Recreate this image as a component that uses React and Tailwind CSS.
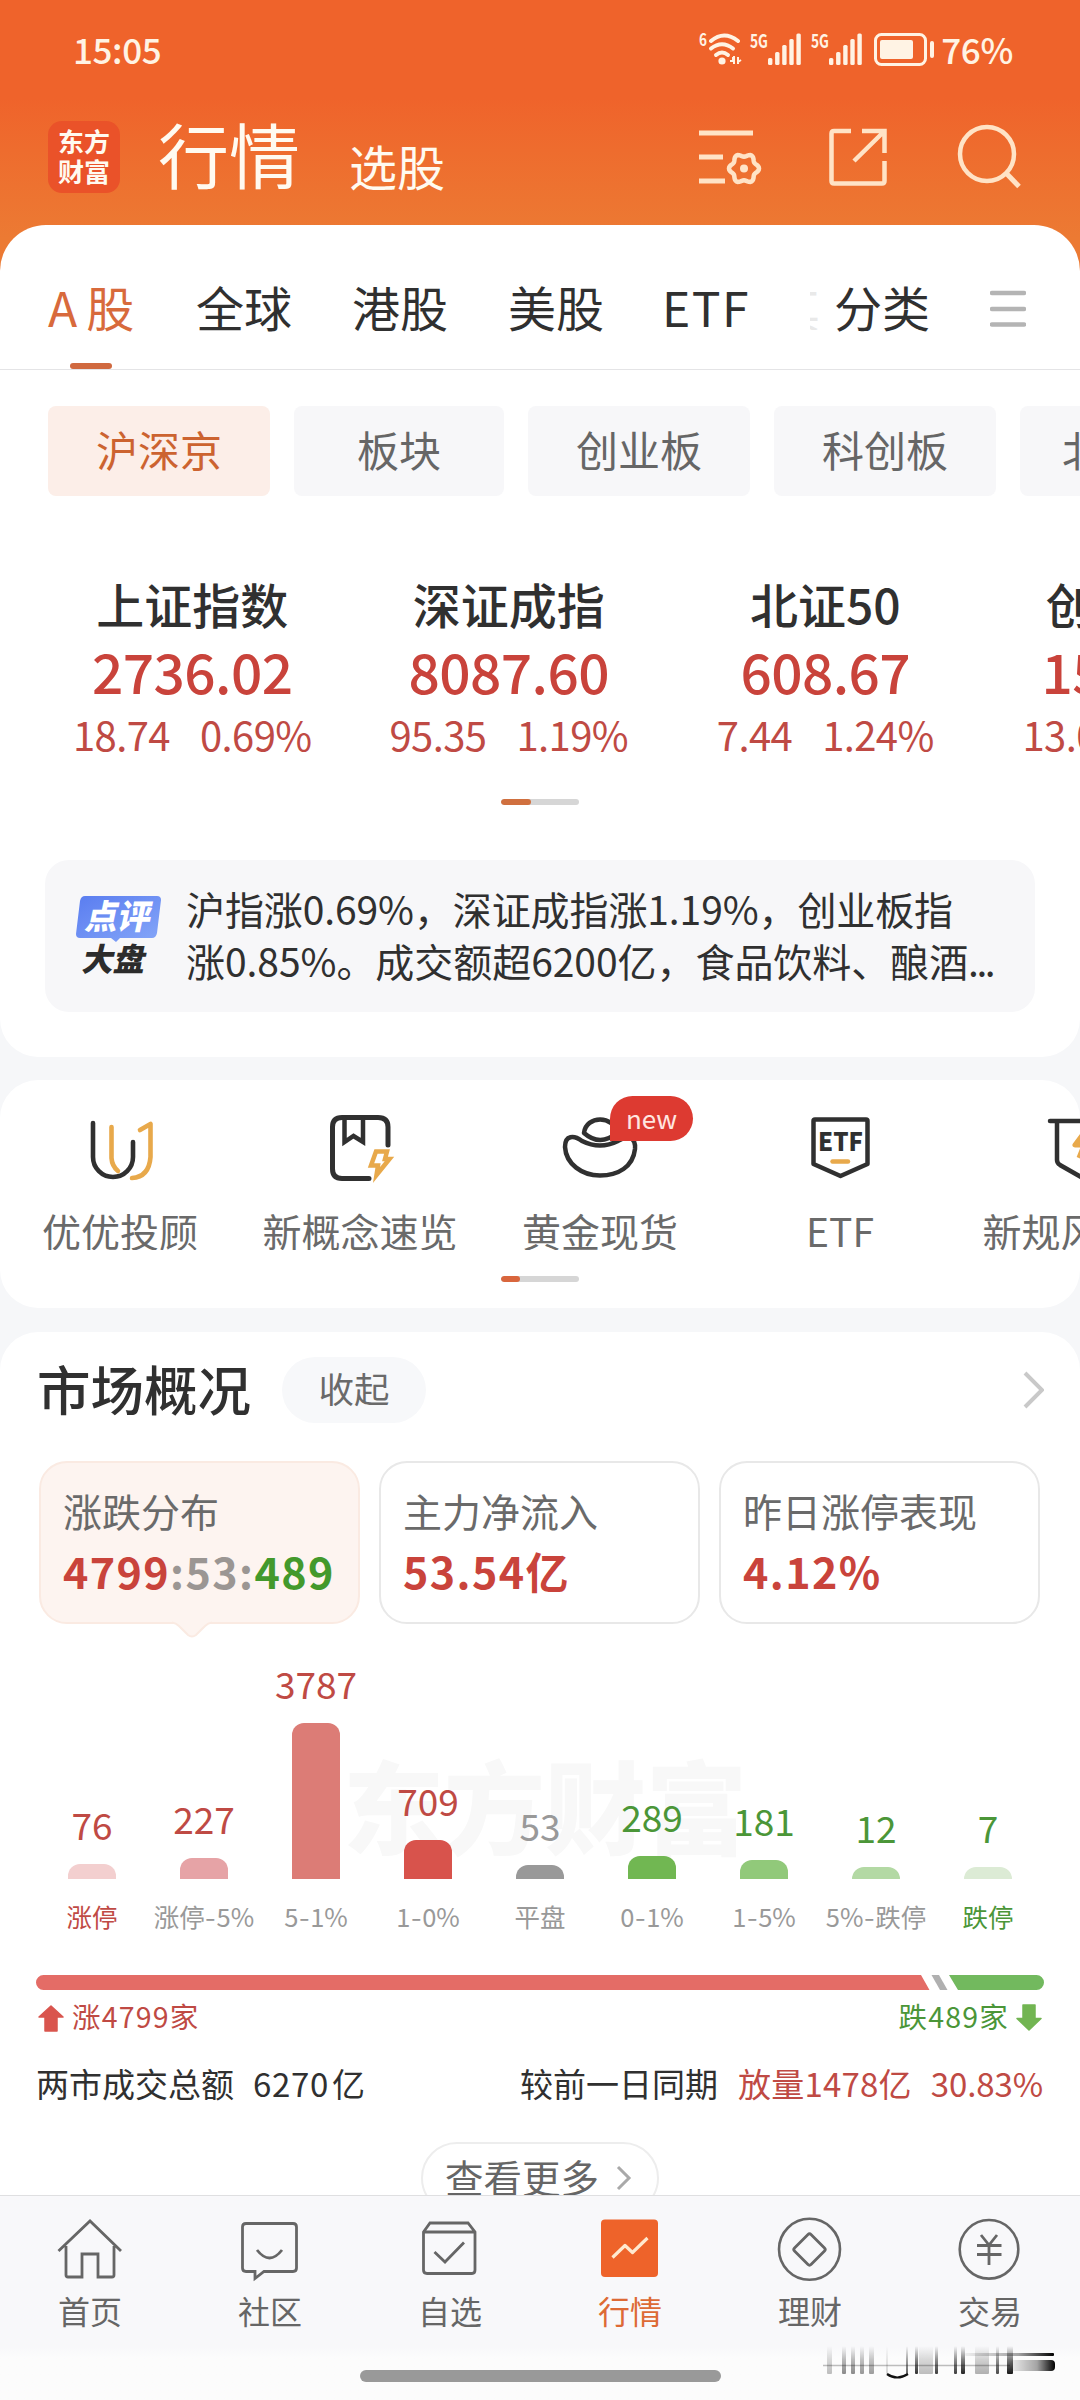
import React from "react";

function Pic({ x, y, w, h, className = "", children }) {
  return (
    <svg width={w} height={h} viewBox={`${x} ${y} ${w} ${h}`} fill="none" className={`block shrink-0 ${className}`}>
      {children}
    </svg>
  );
}

/* ---------- Header ---------- */

function SignalBars({ x }) {
  return (
    <g fill="#fff3e4">
      {[0, 1, 2, 3, 4].map((i) => (
        <rect key={i} x={x + i * 7.1} y={[59, 53, 46, 40, 34.5][i]} width="4.4" height={[7, 13, 20, 26, 31.5][i]} rx="1.5" />
      ))}
    </g>
  );
}

function StatusBar() {
  return (
    <div className="flex h-[96px] items-center pl-[73px] pr-[67px] text-[35px] font-medium leading-none text-[#fff3e4]">
      <span className="tracking-[-0.4px]">15:05</span>
      <div className="ml-auto flex items-center">
        <Pic x={700} y={30} w={240} h={40} className="mt-[2px]">
          <g fill="#fff3e4" fontFamily="Noto Sans CJK SC" fontWeight="700">
            <text x="701" y="46.5" fontSize="17" textLength="8" lengthAdjust="spacingAndGlyphs">6</text>
            <text x="752" y="49" fontSize="19" textLength="18" lengthAdjust="spacingAndGlyphs">5G</text>
            <text x="813" y="49" fontSize="19" textLength="18" lengthAdjust="spacingAndGlyphs">5G</text>
          </g>
          <g stroke="#fff3e4" strokeWidth="4" strokeLinecap="round">
            <path d="M713 42 Q726 31 740 42" />
            <path d="M713 49.500 Q724 41 735 49.500" />
            <path d="M718 56 Q724 51 730 56" />
          </g>
          <circle cx="724" cy="62" r="3.600" fill="#fff3e4" />
          <path d="M732 62 h3 v-4 M736 57 v8 M740 58 v7 M740 63 l3 -2" stroke="#fff3e4" strokeWidth="2" />
          <SignalBars x={770} />
          <SignalBars x={831} />
          <rect x="877.500" y="35.500" width="50" height="30" rx="6" stroke="#fff3e4" strokeWidth="3" />
          <rect x="882" y="41" width="33" height="19" rx="2" fill="#fff3e4" />
          <rect x="932" y="42" width="4" height="17" rx="2" fill="#fff3e4" />
        </Pic>
        <span className="ml-[3px] tracking-[-0.3px]">76%</span>
      </div>
    </div>
  );
}

/* Outline of the six-lobed gear, sampled around its centre. */
const gearPath =
  Array.from({ length: 72 }, (_, i) => {
    const a = (i * Math.PI) / 36;
    const r = 13.4 + 1.6 * Math.cos(6 * a);
    return `${i ? "L" : "M"}${(744 + r * Math.cos(a)).toFixed(2)} ${(168.5 + r * Math.sin(a)).toFixed(2)}`;
  }).join(" ") + " Z";

function TitleBar() {
  return (
    <div className="flex h-[122px] items-center pl-[48px] pr-[58px] text-[#fffaf0]">
      <div className="flex h-[72px] w-[72px] flex-col items-center justify-center rounded-[14px] bg-[#ea5229] pb-[3px] text-[26px] font-bold leading-[30px]">
        <span>东方</span>
        <span>财富</span>
      </div>
      <span className="ml-[38px] mb-[9px] text-[71px] leading-none">行情</span>
      <span className="ml-[49px] mt-[16px] text-[48px] leading-none">选股</span>
      <Pic x={697} y={122} w={66} h={70} className="ml-auto">
        <g stroke="#ffe3c6" strokeWidth="5">
          <path d="M699 133 H753 M699 157 H723 M699 181 H725" />
          <path d={gearPath} strokeWidth="4.500" />
        </g>
        <circle cx="744" cy="168.500" r="4" fill="#ffe3c6" />
      </Pic>
      <Pic x={827} y={122} w={62} h={70} className="ml-[64px]">
        <path d="M851 131 H834 Q831.500 131 831.500 133.500 V181 Q831.500 183.500 834 183.500 H882 Q884.500 183.500 884.500 181 V161 M862 131 H884.500 V153 M884 131.500 L854 161" stroke="#ffe3c6" strokeWidth="4.500" />
      </Pic>
      <Pic x={956} y={122} w={66} h={70} className="ml-[67px]">
        <circle cx="987" cy="154" r="27" stroke="#ffe3c6" strokeWidth="4.500" />
        <path d="M1006 173 L1019 186.500" stroke="#ffe3c6" strokeWidth="5" />
      </Pic>
    </div>
  );
}

/* ---------- Index panel ---------- */

function Tabs() {
  return (
    <div className="flex h-[145px] items-center border-b border-[#e4e4e6] pl-[48px] pt-[18px] text-[48px] leading-none text-[#303030]">
      <span className="relative w-[148px] text-[#d86a3c]">
        <span className="tracking-[2px]">A</span><span className="ml-[7px]">股</span>
        <span className="absolute -bottom-[39px] left-[22px] h-[6px] w-[42px] rounded-full bg-[#d0693f]" />
      </span>
      <span className="w-[156px]">全球</span>
      <span className="w-[156px]">港股</span>
      <span className="w-[154px]">美股</span>
      <span className="w-[148px] tracking-[1.5px]">ETF</span>
      <span className="flex w-[10px] justify-end overflow-hidden whitespace-nowrap text-[#e9e9e9]">其</span>
      <span className="ml-[14px] w-[156px]">分类</span>
      <Pic x={990} y={290} w={36} h={38} className="mt-[5px]">
        <path d="M992 293 H1024 M992 309 H1024 M992 324.500 H1024" stroke="#b4b4b4" strokeWidth="4.500" strokeLinecap="round" />
      </Pic>
    </div>
  );
}

function Chips() {
  const base = "flex h-[90px] shrink-0 items-center justify-center rounded-[8px] bg-[#f7f7f9] pb-[5px]";
  return (
    <div className="mt-[36px] flex gap-[24px] overflow-hidden pl-[48px] text-[42px] leading-none text-[#666]">
      <div className="flex h-[90px] w-[222px] shrink-0 items-center justify-center rounded-[8px] bg-[#fceee8] pb-[5px] text-[#cc6330]">沪深京</div>
      <div className={`${base} w-[210px]`}>板块</div>
      <div className={`${base} w-[222px]`}>创业板</div>
      <div className={`${base} w-[222px]`}>科创板</div>
      <div className={`${base} w-[210px]`}>北交所</div>
    </div>
  );
}

const indices = [
  ["上证指数", "2736.02", "18.74", "0.69%"],
  ["深证成指", "8087.60", "95.35", "1.19%"],
  ["北证50", "608.67", "7.44", "1.24%"],
  ["创业板指", "1549.90", "13.03", "0.85%"],
];

function Indices() {
  return (
    <div className="mt-[82px] flex overflow-hidden pl-[34px]">
      {indices.map(([name, value, diff, pct]) => (
        <div key={name} className="flex w-[316.5px] shrink-0 flex-col items-center">
          <span className="h-[50px] text-[48px] font-medium leading-[50px] text-[#303030]">{name}</span>
          <span className="mt-[12px] h-[60px] text-[55px] font-medium leading-[60px] tracking-[-0.6px] text-[#c9433b]">{value}</span>
          <span className="mt-[14px] flex h-[39px] gap-[30px] text-[40px] leading-[40px] tracking-[-0.6px] text-[#bf4a44]">
            <span>{diff}</span>
            <span>{pct}</span>
          </span>
        </div>
      ))}
    </div>
  );
}

function Commentary() {
  return (
    <div className="mx-[45px] mt-[55px] flex h-[152px] rounded-[24px] bg-[#f7f7f9]">
      <Pic x={74} y={890} w={90} h={90} className="ml-[29px] mt-[30px]">
        <defs>
          <linearGradient id="bubble" x1="0" y1="0" x2="1" y2="1">
            <stop offset="0" stopColor="#5a7df0" />
            <stop offset="1" stopColor="#85a6f8" />
          </linearGradient>
        </defs>
        <path d="M85 896 H157 Q161 896 161 900 L157 933 Q156 938 152 938 H120 L116 942 L111 938 H80 Q76 938 76 934 L80 901 Q81 896 85 896 Z" fill="url(#bubble)" />
        <g fontFamily="Noto Sans CJK SC" fontWeight="900">
          <text transform="translate(84 929) skewX(-12)" fontSize="34" fill="#fff" textLength="65" lengthAdjust="spacingAndGlyphs">点评</text>
          <text transform="translate(81 971) skewX(-12)" fontSize="32" fill="#2c2c2c" textLength="63" lengthAdjust="spacingAndGlyphs">大盘</text>
        </g>
      </Pic>
      <div className="ml-[22px] mt-[22px] whitespace-nowrap text-[39px] leading-[52px] text-[#303030]">
        <div className="tracking-[-0.1px]">沪指涨0.69%，深证成指涨1.19%，创业板指</div>
        <div className="tracking-[-0.05px]">涨0.85%。成交额超6200亿，食品饮料、酿酒<span className="tracking-[-2.5px]">...</span></div>
      </div>
    </div>
  );
}

/* ---------- Shortcuts ---------- */

const INK = "#303030";
const GOLD = "#e8a94b";

function Shortcut({ label, children }) {
  return (
    <div className="flex w-[240px] shrink-0 flex-col items-center">
      {children}
      <span className="mt-[24px] h-[40px] whitespace-nowrap text-[39px] leading-[40px] text-[#6a6a6a]">{label}</span>
    </div>
  );
}

function Shortcuts() {
  return (
    <section className="mt-[23px] h-[228px] rounded-[38px] bg-white pt-[16px]">
      <div className="flex overflow-hidden">
        <Shortcut label="优优投顾">
          <Pic x={75} y={1096} w={90} h={90}>
            <g strokeWidth="4.600" strokeLinecap="round" strokeLinejoin="round">
              <path d="M93 1123 V1157 A20 20 0 0 0 133 1157 V1142" stroke={INK} />
              <path d="M111.500 1127 V1158 Q112 1166 118 1171" stroke={GOLD} />
              <path d="M140 1130 L150.500 1124 V1157 Q149 1177 132 1178" stroke={GOLD} />
            </g>
          </Pic>
        </Shortcut>
        <Shortcut label="新概念速览">
          <Pic x={315} y={1096} w={90} h={90}>
            <g stroke={INK} strokeWidth="5" strokeLinecap="round">
              <path d="M388 1145 V1127 Q388 1117.500 378 1117.500 H342 Q332.500 1117.500 332.500 1127 V1169 Q332.500 1178.500 342 1178.500 H369" />
              <path d="M344.500 1119 V1142 L353.500 1136 L363 1142 V1119" strokeWidth="4.500" />
            </g>
            <path d="M376 1151.500 H387 L385 1159 H389.500 L376.500 1175 L378 1165.500 H371 Z" stroke={GOLD} strokeWidth="4.500" />
          </Pic>
        </Shortcut>
        <Shortcut label="黄金现货">
          <div className="relative">
            <Pic x={555} y={1096} w={90} h={90}>
              <g stroke={INK} strokeWidth="4.500">
                <path d="M584 1133 C586 1115 614 1115 617 1133 Q600 1147 584 1133 Z" strokeLinejoin="round" />
                <path d="M565 1147 C565 1135 574 1135 582 1141 Q600 1150 618 1141 C627 1135 636 1137 635 1149 C633 1167 618 1175.500 600 1175.500 C582 1175.500 566 1164 565 1147 Z" />
              </g>
            </Pic>
            <span className="absolute left-[55px] top-0 flex h-[45px] w-[83px] items-center justify-center rounded-[23px] rounded-bl-none bg-[#dd3a31] pb-[2px] text-[26px] leading-none text-[#ffe6e0]">new</span>
          </div>
        </Shortcut>
        <Shortcut label="ETF">
          <Pic x={795} y={1096} w={90} h={90}>
            <path d="M815 1119.500 H866 Q867.500 1119.500 867.500 1121 V1164 L840.500 1176 L813.500 1164 V1121 Q813.500 1119.500 815 1119.500 Z" stroke={INK} strokeWidth="4.500" strokeLinejoin="round" />
            <text x="818" y="1151" fontFamily="Noto Sans CJK SC" fontWeight="900" fontSize="25" fill={INK} textLength="45" lengthAdjust="spacingAndGlyphs">ETF</text>
            <path d="M832.500 1161.500 H848" stroke={GOLD} strokeWidth="4.500" strokeLinecap="round" />
          </Pic>
        </Shortcut>
        <Shortcut label="新规风险股">
          <Pic x={1035} y={1096} w={90} h={90}>
            <path d="M1050 1121 H1114 M1057 1121 V1160 Q1057 1163 1060 1165 L1081 1177" stroke={INK} strokeWidth="4.500" strokeLinecap="round" />
            <path d="M1086 1130 L1075 1145 H1084 L1079 1158" stroke={GOLD} strokeWidth="5" strokeLinejoin="round" />
          </Pic>
        </Shortcut>
      </div>
      <div className="mx-auto mt-[26px] flex h-[6px] w-[78px] overflow-hidden rounded-full bg-[#d6d6d6]">
        <div className="w-[19px] rounded-full bg-[#d9663d]" />
      </div>
    </section>
  );
}

/* ---------- Market overview ---------- */

const bars = [
  ["76", "涨停", 15, "bg-[#f3cfcf]", "text-[#bf4a44]", "text-[#bf4a44]"],
  ["227", "涨停-5%", 21, "bg-[#e6a3a6]", "text-[#bf4a44]", "text-[#999]"],
  ["3787", "5-1%", 156, "bg-[#dc7c76]", "text-[#bf4a44]", "text-[#999]"],
  ["709", "1-0%", 39, "bg-[#d8534c]", "text-[#bf4a44]", "text-[#999]"],
  ["53", "平盘", 14, "bg-[#999999]", "text-[#999]", "text-[#999]"],
  ["289", "0-1%", 23, "bg-[#71b752]", "text-[#4b9638]", "text-[#999]"],
  ["181", "1-5%", 19, "bg-[#91c97a]", "text-[#4b9638]", "text-[#999]"],
  ["12", "5%-跌停", 12, "bg-[#b3d9a4]", "text-[#4b9638]", "text-[#999]"],
  ["7", "跌停", 12, "bg-[#dcebd5]", "text-[#4b9638]", "text-[#4b9638]"],
];

function Distribution() {
  return (
    <div className="relative">
      <div className="absolute left-[343px] top-[124px] whitespace-nowrap text-[101px] font-black leading-[110px] text-[#f8f8f8]">东方财富</div>
      <div className="relative flex h-[255px] items-end pl-[36px]">
        {bars.map(([n, label, h, bg, color]) => (
          <div key={label} className="flex w-[112px] flex-col items-center">
            <span className={`mb-[21px] h-[38px] text-[37px] leading-[38px] ${color}`}>{n}</span>
            <div className={`w-[48px] rounded-t-[12px] ${bg}`} style={{ height: h }} />
          </div>
        ))}
      </div>
      <div className="relative mt-[23px] flex h-[27px] pl-[36px] text-[25.5px] leading-[28px]">
        {bars.map(([n, label, h, bg, color, labelColor]) => {
          const [head, tail] = label.split("-");
          return (
            <span key={label} className={`flex w-[112px] justify-center whitespace-nowrap ${labelColor}`}>
              {head}
              {tail && <span className="mx-[1.500px] scale-x-[1.2]">-</span>}
              {tail}
            </span>
          );
        })}
      </div>
    </div>
  );
}

function Card({ label, children, active }) {
  return (
    <div className={`relative h-[163px] w-[321px] rounded-[28px] border-2 pl-[22px] pt-[27px] ${active ? "border-[#faeae2] bg-[#fdf4f0]" : "border-[#e8e8e8] bg-white"}`}>
      <div className="h-[40px] whitespace-nowrap text-[39px] leading-[40px] text-[#6a6a6a]">{label}</div>
      <div className="mt-[18px] h-[44px] whitespace-nowrap text-[43px] font-bold leading-[44px] tracking-[1.4px] text-[#c9433b]">{children}</div>
      {active && (
        <svg width="44" height="18" viewBox="0 0 44 18" className="absolute -bottom-[17px] left-[129px]" fill="none">
          <path d="M2 1 Q6 2 9 5 L18 14 Q22 17 26 14 L35 5 Q38 2 42 1 V0 H2 Z" fill="#fdf4f0" />
          <path d="M2 1.500 Q6 2 9 5 L18 14 Q22 17 26 14 L35 5 Q38 2 42 1.500" stroke="#faeae2" strokeWidth="2" />
        </svg>
      )}
    </div>
  );
}

function Overview() {
  return (
    <section className="mt-[24px] h-[863px] overflow-hidden rounded-t-[38px] bg-white pt-[25px]">
      <div className="flex h-[66px] items-center pl-[37px] pr-[36px]">
        <h2 className="mb-[4px] text-[53.5px] font-medium leading-none text-[#303030]">市场概况</h2>
        <span className="ml-[31px] flex h-[66px] w-[144px] items-center justify-center rounded-[33px] bg-[#f7f8fa] pb-[4px] text-[35.5px] leading-none text-[#6a6a6a]">收起</span>
        <Pic x={1022} y={1370} w={22} h={40} className="ml-auto">
          <path d="M1025 1373 L1042 1390 L1025 1407" stroke="#c9c9c9" strokeWidth="4" />
        </Pic>
      </div>
      <div className="mt-[38px] flex gap-[19px] pl-[39px]">
        <Card label="涨跌分布" active>
          4799<span className="text-[#9b9693]">:53:</span><span className="text-[#43992c]">489</span>
        </Card>
        <Card label="主力净流入">53.54亿</Card>
        <Card label="昨日涨停表现">4.12%</Card>
      </div>
      <Distribution />
      <Pic x={36} y={1975} w={1008} h={15} className="ml-[36px] mt-[46px]">
        <path d="M43.500 1975 H921 L929.500 1990 H43.500 A7.500 7.500 0 0 1 43.500 1975 Z" fill="#e46c66" />
        <path d="M931.500 1975 H939 L947.500 1990 H940 Z" fill="#b0b0b0" />
        <path d="M949 1975 H1036.500 A7.500 7.500 0 0 1 1036.500 1990 H958 Z" fill="#72b95e" />
      </Pic>
      <div className="mt-[12px] flex h-[27px] items-center pl-[38px] pr-[38px] text-[28.5px] leading-[28px]">
        <Pic x={38} y={2006} w={26} h={27} className="mt-[6px]">
          <path d="M51 2007 L63 2018 H57 V2032 H45 V2018 H39 Z" fill="#d9554e" stroke="#d9554e" strokeWidth="1.500" strokeLinejoin="round" />
        </Pic>
        <span className="ml-[8px] tracking-[1.2px] text-[#bf4a44]">涨4799家</span>
        <span className="ml-auto tracking-[1.2px] text-[#4b9638]">跌489家</span>
        <Pic x={1016} y={2004} w={26} h={27} className="ml-[7px] mt-[4px]">
          <path d="M1029 2030 L1041 2018.500 H1035 V2005 H1023 V2018.500 H1017 Z" fill="#72b552" stroke="#72b552" strokeWidth="1.500" strokeLinejoin="round" />
        </Pic>
      </div>
      <div className="mt-[37px] flex h-[34px] whitespace-nowrap pl-[36px] pr-[37px] text-[33px] leading-[34px] text-[#303030]">
        <span>两市成交总额</span>
        <span className="ml-[19px] tracking-[0.7px]">6270<span className="ml-[3px]">亿</span></span>
        <span className="ml-auto">较前一日同期</span>
        <span className="ml-[20px] tracking-[0.2px] text-[#bf4a44]">放量1478亿</span>
        <span className="ml-[19px] tracking-[-0.1px] text-[#bf4a44]">30.83%</span>
      </div>
      <div className="mx-auto mt-[42px] flex h-[72px] w-[238px] items-center rounded-full border-[2px] border-[#ededed] pb-[4px] pl-[22px] text-[38.500px] leading-none text-[#666]">
        <span className="whitespace-nowrap">查看更多</span>
        <Pic x={616} y={2164} w={18} h={28} className="ml-[17px] mt-[4px]">
          <path d="M618 2167 L629 2178 L618 2189" stroke="#a9a9a9" strokeWidth="3" />
        </Pic>
      </div>
    </section>
  );
}

/* ---------- Bottom navigation ---------- */

function NavItem({ label, active, children }) {
  return (
    <div className={`flex w-[180px] flex-col items-center ${active ? "text-[#dd6a35]" : "text-[#666]"}`}>
      {children}
      <span className="mt-[8px] h-[34px] text-[32px] leading-[34px]">{label}</span>
    </div>
  );
}

const smears = [
  [827, 5, 0.25], [842, 4, 0.45], [851, 4, 0.45], [860, 4, 0.4], [869, 5, 0.38], [886, 2, 0.15], [906, 2, 0.6],
  [915, 3, 0.8], [919, 14, 0.25], [935, 3, 0.75], [954, 3, 0.75], [961, 4, 0.85], [975, 14, 0.3], [996, 3, 0.7], [1007, 6, 0.9],
];

function BottomNav() {
  return (
    <nav className="h-[205px] bg-[#fcfcfc]">
      <div className="flex h-[152px] border-t border-[#dfdfe1] bg-[#f8f8fa] pt-[19px]">
        <NavItem label="首页">
          <Pic x={55} y={2215} w={70} h={70}>
            <path d="M58.500 2251 L90 2221 L121 2251 M66 2246 V2275 Q66 2277 68 2277 H82 V2254 H98 V2277 H112 Q114 2277 114 2275 V2246" stroke="#666" strokeWidth="2.800" />
          </Pic>
        </NavItem>
        <NavItem label="社区">
          <Pic x={235} y={2215} w={70} h={70}>
            <path d="M246 2223.500 H293 Q296.500 2223.500 296.500 2227 V2268 Q296.500 2271.500 293 2271.500 H264 L255 2278.500 V2271.500 H246 Q242.500 2271.500 242.500 2268 V2227 Q242.500 2223.500 246 2223.500 Z M257 2250 Q269.500 2266 282 2250" stroke="#666" strokeWidth="2.800" />
          </Pic>
        </NavItem>
        <NavItem label="自选">
          <Pic x={415} y={2215} w={70} h={70}>
            <path d="M423.500 2232 L430 2223 H468 L475 2232 V2270 Q475 2273.500 472 2273.500 H427 Q423.500 2273.500 423.500 2270 Z M423.500 2232 H475 M434.500 2252 L445 2262 L464 2242.500" stroke="#666" strokeWidth="2.800" />
          </Pic>
        </NavItem>
        <NavItem label="行情" active>
          <Pic x={595} y={2215} w={70} h={70}>
            <rect x="601" y="2219.500" width="57" height="57.500" rx="4" fill="#ee632a" />
            <path d="M612.500 2257.500 L625 2245.500 L632.500 2252.500 L647.500 2238" stroke="#ffe9cf" strokeWidth="3.200" strokeLinejoin="round" />
          </Pic>
        </NavItem>
        <NavItem label="理财">
          <Pic x={775} y={2215} w={70} h={70}>
            <circle cx="809.500" cy="2249.300" r="30.500" stroke="#666" strokeWidth="2.600" />
            <path d="M808 2234.500 Q809.500 2233 811 2234.500 L824.500 2248 Q826 2249.500 824.500 2251 L811 2264.500 Q809.500 2266 808 2264.500 L794.500 2251 Q793 2249.500 794.500 2248 Z" stroke="#666" strokeWidth="2.800" />
          </Pic>
        </NavItem>
        <NavItem label="交易">
          <Pic x={955} y={2215} w={70} h={70}>
            <circle cx="989" cy="2249.300" r="29.300" stroke="#666" strokeWidth="2.600" />
            <path d="M981 2235 L989 2245 L997 2235 M977 2245.500 H1001.500 M977 2254.500 H1001.500 M989 2245 V2265" stroke="#666" strokeWidth="2.800" />
          </Pic>
        </NavItem>
      </div>
      <div className="relative h-[53px] bg-linear-to-b from-[#f8f8fa] to-[#fcfcfc] to-20%">
        <div className="mx-auto h-[12px] w-[361px] translate-y-[23px] rounded-full bg-[#999]" />
        <Pic x={820} y={2345} w={240} h={36} className="absolute left-[820px] -top-[2px]">
          <defs>
            <linearGradient id="fadeDown" x1="0" y1="0" x2="0" y2="1">
              <stop offset="0" stopColor="#000" stopOpacity="0" />
              <stop offset="0.5" stopColor="#000" stopOpacity="0.6" />
              <stop offset="1" stopColor="#000" />
            </linearGradient>
            <linearGradient id="fadeRight" x1="0" y1="0" x2="1" y2="0">
              <stop offset="0" stopColor="#000" stopOpacity="0.05" />
              <stop offset="0.6" stopColor="#000" stopOpacity="0.35" />
              <stop offset="1" stopColor="#000" />
            </linearGradient>
          </defs>
          {smears.map(([x, w, o]) => (
            <rect key={x} x={x} y="2346" width={w} height="28" rx="1" fill="url(#fadeDown)" opacity={o} />
          ))}
          <path d="M887 2374 Q897 2381 908 2374" stroke="#111" strokeWidth="2.200" />
          <path d="M823 2365.500 H1010" stroke="#000" strokeOpacity="0.250" strokeWidth="1.500" />
          <rect x="965" y="2353" width="89" height="3" rx="1" fill="url(#fadeRight)" />
          <rect x="1010" y="2360" width="45" height="11" rx="4" fill="url(#fadeRight)" />
        </Pic>
      </div>
    </nav>
  );
}

export default function App() {
  return (
    <div className="h-[2400px] w-[1080px] overflow-hidden bg-[#f6f7f9] font-['Noto_Sans_CJK_SC','Noto_Sans',sans-serif]">
      <header className="h-[280px] bg-linear-to-b from-[#ef632b] from-35% to-[#ec7a33] to-85%">
        <StatusBar />
        <TitleBar />
      </header>
      <section className="-mt-[55px] h-[832px] rounded-t-[46px] rounded-b-[38px] bg-white">
        <Tabs />
        <Chips />
        <Indices />
        <div className="mx-auto mt-[46px] flex h-[6px] w-[78px] overflow-hidden rounded-full bg-[#d6d6d6]">
          <div className="w-[30px] rounded-full bg-[#d0703f]" />
        </div>
        <Commentary />
      </section>
      <Shortcuts />
      <Overview />
      <BottomNav />
    </div>
  );
}
